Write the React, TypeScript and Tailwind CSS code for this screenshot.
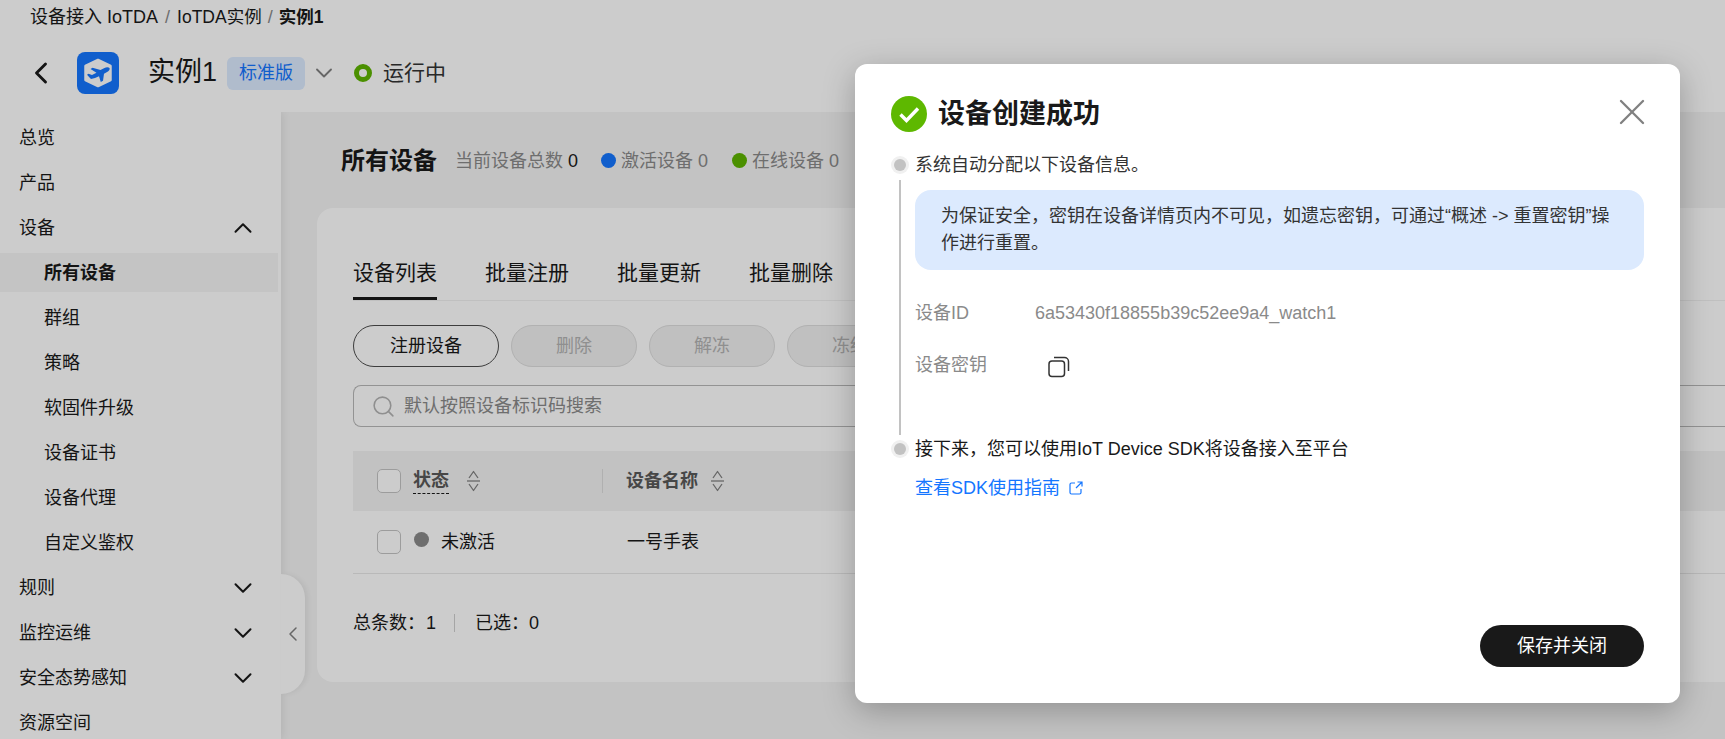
import { ChevronDown, ChevronLeft, ChevronUp, Search, X } from 'lucide-react';

const navItems = [
  { label: '总览' },
  { label: '产品' },
  { label: '设备', icon: 'up' },
  { label: '所有设备', sub: true, active: true },
  { label: '群组', sub: true },
  { label: '策略', sub: true },
  { label: '软固件升级', sub: true },
  { label: '设备证书', sub: true },
  { label: '设备代理', sub: true },
  { label: '自定义鉴权', sub: true },
  { label: '规则', icon: 'down' },
  { label: '监控运维', icon: 'down' },
  { label: '安全态势感知', icon: 'down' },
  { label: '资源空间' },
];

function SortIcon() {
  return (
    <svg width="15" height="22" viewBox="0 0 15 22" fill="none" stroke="#808080" strokeWidth="1.3" className="shrink-0">
      <path d="M3 8 7.500 1.500 12 8" strokeLinejoin="round" />
      <path d="M1 11h13" />
      <path d="M3 14 7.500 20.500 12 14" strokeLinejoin="round" />
    </svg>
  );
}

function Checkbox() {
  return <div className="h-[24px] w-[24px] shrink-0 rounded-[5px] border border-[#c4c4c4] bg-white" />;
}

function Logo() {
  return (
    <svg width="42" height="42" viewBox="0 0 42 42" className="shrink-0">
      <rect width="42" height="42" rx="8" fill="#1476ff" />
      <path d="M21 8 33.500 14V28L21 34 8.500 28V14Z" fill="#fff" stroke="#fff" strokeWidth="2.500" strokeLinejoin="round" />
      <path
        d="M32.500 16C31.500 14.800 29 15.200 27 16.200L23.500 18 15.500 15.800 13.500 17 19.500 20.800 15 23 11.500 21.800 10 22.800 13 26 14 27 18 26 22 24.200 23.800 30 26 28.800 27 21.800 30.500 19.800C32 19 33.200 17.200 32.500 16Z"
        fill="#1476ff"
      />
    </svg>
  );
}

function StepDot() {
  return (
    <span className="flex h-[18px] w-[18px] shrink-0 items-center justify-center rounded-full bg-[#f0f0f0]">
      <span className="h-[12px] w-[12px] rounded-full bg-[#c2c2c2]" />
    </span>
  );
}

export default function App() {
  return (
    <div className="relative flex h-[739px] w-[1725px] flex-col overflow-hidden bg-[#f4f4f4] font-['Liberation_Sans','Noto_Sans_CJK_SC',sans-serif] text-[#191919]">
      {/* top header */}
      <header className="z-10 h-[112px] shrink-0 bg-white">
        <div className="flex h-[34px] items-center pl-[30px] text-[18px] leading-[34px]">
          <span>设备接入 IoTDA</span>
          <span className="mx-[7px] text-[#8a8a8a]">/</span>
          <span className="text-[17.500px]">IoTDA实例</span>
          <span className="mx-[6px] text-[#8a8a8a]">/</span>
          <span className="text-[17.500px] font-bold">实例1</span>
        </div>
        <div className="mt-[18px] flex h-[42px] items-center">
          <ChevronLeft className="ml-[23px] h-[36px] w-[36px] text-[#191919]" strokeWidth={1.9} />
          <div className="ml-[18px]">
            <Logo />
          </div>
          <span className="ml-[29px] pb-[2px] text-[27px] leading-[40px]">实例1</span>
          <span className="ml-[10px] flex h-[33px] w-[78px] items-center justify-center rounded-[6px] bg-[#dcebff] text-[18px] text-[#1476ff]">
            标准版
          </span>
          <ChevronDown className="ml-[5px] mr-[2px] h-[28px] w-[28px] text-[#808080]" strokeWidth={1.6} />
          <span className="ml-[14px] h-[18px] w-[18px] rounded-full border-[5px] border-[#5eb400]" />
          <span className="ml-[11px] text-[21px] text-[#333]">运行中</span>
        </div>
      </header>

      <div className="flex min-h-0 flex-1">
        {/* side nav */}
        <aside className="relative z-[5] w-[281px] shrink-0 bg-white pt-[6px] shadow-[2px_0_8px_rgba(0,0,0,0.08)]">
          <ul className="flex flex-col gap-[6px]">
            {navItems.map((item) => (
              <li
                key={item.label}
                className={`mr-[3px] flex h-[39px] items-center justify-between pr-[20px] text-[18px] ${item.sub ? 'pl-[44px]' : 'pl-[19px]'} ${item.active ? 'bg-[#f5f5f5] font-bold' : ''}`}
              >
                <span className="pt-[2px]">{item.label}</span>
                {item.icon === 'up' && <ChevronUp className="h-[30px] w-[30px]" strokeWidth={1.6} />}
                {item.icon === 'down' && <ChevronDown className="h-[30px] w-[30px]" strokeWidth={1.6} />}
              </li>
            ))}
          </ul>
          <button className="absolute left-[281px] top-[462px] flex h-[120px] w-[24px] items-center justify-center rounded-r-[24px] bg-white shadow-[3px_0_5px_rgba(0,0,0,0.06)]">
            <ChevronLeft className="h-[28px] w-[28px] text-[#808080]" strokeWidth={1.5} />
          </button>
        </aside>

        {/* main */}
        <main className="min-w-0 flex-1 pl-[36px]">
          <div className="flex h-[96px] items-center pl-[24px] text-[18px] text-[#8a8a8a]">
            <h1 className="pt-[2px] text-[24px] font-bold text-[#191919]">所有设备</h1>
            <span className="ml-[18px] pt-[2px]">当前设备总数 <span className="text-[#191919]">0</span></span>
            <span className="ml-[23px] h-[15px] w-[15px] rounded-full bg-[#1476ff]" />
            <span className="ml-[5px] pt-[2px]">激活设备 0</span>
            <span className="ml-[24px] h-[15px] w-[15px] rounded-full bg-[#5eb400]" />
            <span className="ml-[5px] pt-[2px]">在线设备 0</span>
          </div>

          <section className="h-[474px] rounded-l-[16px] bg-white pl-[36px] pt-[44px]">
            <div className="flex h-[49px] gap-[48px] border-b border-[#f0f0f0] text-[21px]">
              <span className="h-[48px] border-b-[3px] border-[#191919] pt-[5px]">设备列表</span>
              <span className="pt-[5px]">批量注册</span>
              <span className="pt-[5px]">批量更新</span>
              <span className="pt-[5px]">批量删除</span>
            </div>

            <div className="mt-[24px] flex gap-[12px] text-[18px]">
              <button className="h-[42px] w-[146px] rounded-full border border-[#4d4d4d] bg-white">注册设备</button>
              {['删除', '解冻', '冻结'].map((label) => (
                <button
                  key={label}
                  className="h-[42px] w-[126px] rounded-full border border-[#dedede] bg-[#f0f0f0] text-[#b3b3b3]"
                >
                  {label}
                </button>
              ))}
            </div>

            <div className="mt-[18px] flex h-[42px] items-center rounded-l-[8px] border border-r-0 border-[#b8b8b8] pl-[17px] text-[18px] text-[#8a8a8a]">
              <Search className="h-[25px] w-[25px] text-[#b3b3b3]" strokeWidth={1.5} />
              <span className="ml-[8px]">默认按照设备标识码搜索</span>
            </div>

            <div className="mt-[24px] flex h-[60px] items-center bg-[#f3f3f3] pl-[24px] text-[18px] font-bold text-[#595959]">
              <Checkbox />
              <span className="ml-[12px] border-b border-dashed border-[#191919] leading-[25px]">状态</span>
              <span className="ml-[17px]">
                <SortIcon />
              </span>
              <span className="ml-[121px] h-[24px] w-px bg-[#dcdcdc]" />
              <span className="ml-[23px]">设备名称</span>
              <span className="ml-[12px]">
                <SortIcon />
              </span>
            </div>
            <div className="flex h-[63px] items-center border-b border-[#e8e8e8] pl-[24px] text-[18px]">
              <Checkbox />
              <span className="ml-[13px] mt-[-5px] h-[15px] w-[15px] rounded-full bg-[#8a8a8a]" />
              <span className="ml-[12px] w-[186px]">未激活</span>
              <span>一号手表</span>
            </div>

            <div className="mt-[36px] flex items-center text-[18px] leading-[26px]">
              <span>总条数：</span>
              <span className="ml-[1px]">1</span>
              <span className="ml-[18px] mr-[20px] h-[18px] w-px bg-[#cfcfcf]" />
              <span>已选：</span>
              <span>0</span>
            </div>
          </section>
        </main>
      </div>

      {/* dimming layer */}
      <div className="absolute inset-0 z-20 bg-black/20" />

      {/* dialog */}
      <div className="absolute left-[855px] top-[64px] z-30 flex h-[639px] w-[825px] flex-col rounded-[12px] bg-white pl-[36px] pr-[36px] shadow-[0_8px_32px_rgba(0,0,0,0.26)]">
        <div className="mt-[11px] flex h-[78px] shrink-0 items-center">
          <svg width="36" height="36" viewBox="0 0 36 36" className="shrink-0">
            <circle cx="18" cy="18" r="18" fill="#5eb800" />
            <path d="M9.500 18.500 15.500 24.500 27 12.500" fill="none" stroke="#fff" strokeWidth="3.400" />
          </svg>
          <h2 className="ml-[11px] text-[27px] font-bold">设备创建成功</h2>
          <X className="ml-auto mr-[-10px] mt-[-4px] h-[44px] w-[44px] text-[#808080]" strokeWidth={1.3} />
        </div>

        <div className="flex h-[24px] shrink-0 items-center text-[18px] text-[#333]">
          <StepDot />
          <span className="ml-[6px]">系统自动分配以下设备信息。</span>
        </div>

        <div className="ml-[8px] mt-[3px] flex h-[255px] shrink-0 flex-col border-l-2 border-[#c2c2c2] pl-[14px] text-[18px]">
          <div className="mt-[10px] h-[80px] w-[729px] shrink-0 rounded-[16px] bg-[#dceafe] pl-[26px] pr-[30px] pt-[13px] leading-[27px] text-[#333]">
            为保证安全，密钥在设备详情页内不可见，如遗忘密钥，可通过“概述 -&gt; 重置密钥”操作进行重置。
          </div>
          <div className="mt-[30px] flex h-[26px] items-center text-[#8a8a8a]">
            <span className="w-[120px]">设备ID</span>
            <span>6a53430f18855b39c52ee9a4_watch1</span>
          </div>
          <div className="mt-[26px] flex h-[26px] items-center text-[#8a8a8a]">
            <span className="w-[133px]">设备密钥</span>
            <svg width="22" height="22" viewBox="0 0 22 22" fill="none" stroke="#333" strokeWidth="1.500" className="mt-[3px] shrink-0">
              <rect x="1" y="5" width="15.500" height="15.500" rx="3" />
              <path d="M6 1.500h10.500a4 4 0 0 1 4 4V15" />
            </svg>
          </div>
        </div>

        <div className="flex h-[28px] shrink-0 items-center text-[18px]">
          <StepDot />
          <span className="ml-[6px]">接下来，您可以使用IoT Device SDK将设备接入至平台</span>
        </div>

        <div className="mt-[12px] flex items-center pl-[24px] text-[18px] leading-[26px] text-[#1476ff]">
          <span>查看SDK使用指南</span>
          <svg width="14" height="14" viewBox="0 0 14 14" fill="none" stroke="currentColor" strokeWidth="1.200" className="ml-[9px]">
            <path d="M6 2H2.500A1.500 1.500 0 0 0 1 3.500v8A1.500 1.500 0 0 0 2.500 13h8a1.500 1.500 0 0 0 1.500-1.500V8" />
            <path d="M8.500 1H13v4.500M13 1 7 7" />
          </svg>
        </div>

        <div className="mt-auto mb-[36px] flex justify-end">
          <button className="h-[42px] w-[164px] rounded-full bg-[#191919] text-[18px] text-white">保存并关闭</button>
        </div>
      </div>
    </div>
  );
}
